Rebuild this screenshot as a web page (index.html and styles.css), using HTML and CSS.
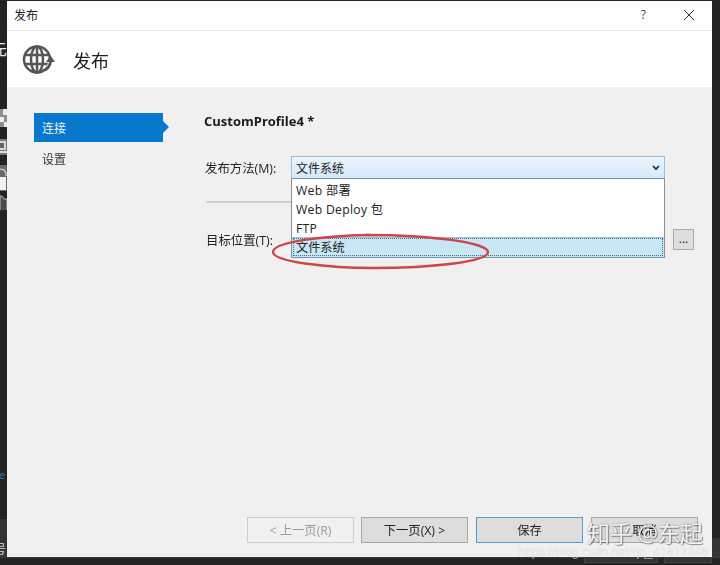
FILE: index.html
```html
<!DOCTYPE html>
<html lang="zh">
<head>
<meta charset="utf-8">
<title>发布</title>
<link rel="stylesheet" href="styles.css">
</head>
<body>
<div class="desktop">
  <div class="top-row">
    <aside class="left-strip">
      <span class="strip-char">先</span>
      <svg class="strip-icons" width="7" height="105" viewBox="0 0 7 105">
        <path d="M0 4h7v18H0z" fill="#8d8d8d"/>
        <path d="M3 4h4v6H3zM0 12h4v5H0zM4 17h3v5H4z" fill="#ececec"/>
        <path d="M0 34h7v16H0z" fill="#777"/>
        <path d="M0 36h6v9H0z" fill="#d8d8d8"/>
        <path d="M0 38h4v5H0z" fill="#666"/>
        <path d="M0 46h7v2H0z" fill="#e0e0e0"/>
        <path d="M0 60h7v26H0z" fill="#6a6a6a"/>
        <path d="M0 72h6v13H0z" fill="#f2f2f2"/>
        <path d="M0 64l4 1 2 3v3" fill="none" stroke="#ddd" stroke-width="1.2"/>
        <path d="M0 91h2l2 3h3v12H0z" fill="#4c4c4c" stroke="#bbb" stroke-width="1"/>
      </svg>
      <span class="strip-blue">e</span>
      <span class="strip-foot"><span class="strip-num">号</span></span>
    </aside>
    <main class="window">
      <header class="titlebar">
        <span class="titlebar-text">发布</span>
        <span class="titlebar-help">?</span>
        <svg class="titlebar-close" width="12" height="12" viewBox="0 0 12 12"><path d="M1 1l10 10M11 1L1 11" stroke="#333" stroke-width="1" fill="none"/></svg>
      </header>
      <section class="banner">
        <svg class="banner-icon" width="34" height="32" viewBox="0 0 34 32">
          <g fill="none" stroke="#555" stroke-width="2.500">
            <circle cx="15" cy="15.500" r="13"/>
            <ellipse cx="15" cy="15.500" rx="6" ry="13"/>
            <path d="M15 2.500v26M3 11h24M3 20h24"/>
          </g>
          <path d="M22 27.500c4-1 7-5 7-11" fill="none" stroke="#fff" stroke-width="6"/>
          <path d="M21 26.500c4-1 7-4 7.500-9" fill="none" stroke="#555" stroke-width="2.800"/>
          <path d="M24 18l4.500-6.500L33 18z" fill="#555"/>
        </svg>
        <h1 class="banner-title">发布</h1>
      </section>
      <div class="content">
        <nav class="sidebar">
          <div class="nav-item nav-active">连接</div>
          <div class="nav-item">设置</div>
        </nav>
        <div class="form">
          <h2 class="profile">CustomProfile4 *</h2>
          <div class="field method">
            <label class="field-label">发布方法(M):</label>
            <div class="select">
              <span>文件系统</span>
              <svg class="chevron" width="8" height="6" viewBox="0 0 8 6"><path d="M1 1l3 3 3-3" fill="none" stroke="#222" stroke-width="1.6"/></svg>
              <ul class="options">
                <li>Web 部署</li>
                <li>Web Deploy 包</li>
                <li>FTP</li>
                <li class="option-selected">文件系统</li>
              </ul>
            </div>
          </div>
          <hr class="divider">
          <div class="field target">
            <label class="field-label">目标位置(T):</label>
            <button class="browse">...</button>
          </div>
          <svg class="ring" width="222" height="40" viewBox="0 0 222 40">
            <path d="M100 3C50 4 3 10 3 20c0 10 57 16 100 16 57 0 115-6 115-16 0-9-53-17-123-17" fill="none" stroke="#cf4448" stroke-width="2.400"/>
          </svg>
        </div>
      </div>
      <footer class="footer">
        <button class="btn btn-disabled">&lt; 上一页(R)</button>
        <button class="btn">下一页(X) &gt;</button>
        <button class="btn btn-default">保存</button>
        <button class="btn">取消</button>
      </footer>
    </main>
    <aside class="right-strip"><span class="right-foot"></span></aside>
  </div>
  <div class="bottom-strip">
    <span class="taskbtn taskbtn-a"></span>
    <span class="taskbtn taskbtn-b"></span>
  </div>
  <div class="mark-zhihu">知乎 @东起</div>
  <div class="mark-csdn">https://blog.csdn.net/qq_41617848</div>
</div>
</body>
</html>
```
FILE: styles.css
```css
* { box-sizing: border-box; }
html, body { margin: 0; padding: 0; }
body {
  width: 720px;
  height: 565px;
  overflow: hidden;
  background: #262626;
  font-family: "Open Sans", "Noto Sans CJK SC", sans-serif;
  font-size: 12px;
  color: #222;
}
.desktop {
  position: relative;
  width: 720px;
  height: 565px;
  display: flex;
  flex-direction: column;
  padding-top: 1px;
  overflow: hidden;
  filter: blur(0.35px);
}
.top-row { display: flex; height: 556px; }
.left-strip { position: relative; width: 7px; overflow: hidden; background: #232323; }
.strip-char { position: absolute; left: -10px; top: 38px; font-size: 17px; line-height: 20px; color: #e8e8e8; }
.strip-icons { position: absolute; left: 0; top: 104px; }
.strip-blue { position: absolute; left: -1px; top: 467px; font-size: 11px; line-height: 14px; color: #2f7fc0; }
.strip-foot { position: absolute; left: 0; top: 518px; width: 7px; height: 38px; background: #333; }
.strip-num { position: absolute; left: -6px; top: 24px; font-size: 12px; line-height: 14px; color: #d8d8d8; }
.right-strip { position: relative; width: 8px; background: #232323; }
.right-foot { position: absolute; left: 0; top: 537px; width: 8px; height: 19px; background: #343434; }
.window { width: 705px; display: flex; flex-direction: column; background: #f0f0f0; }
.titlebar { height: 30px; display: flex; align-items: center; background: #fff; border-bottom: 1px solid #ececec; padding: 0 17px 2px 7px; }
.titlebar-text { font-size: 12px; color: #222; flex: 1; }
.titlebar-help { font-size: 12px; color: #444; margin-right: 37px; }
.banner { height: 56px; display: flex; align-items: center; padding-left: 15px; background: #fff; }
.banner-icon { flex: none; margin-top: 2px; }
.banner-title { margin: 4px 0 0 17px; font-size: 18px; font-weight: 400; color: #1f1f1f; line-height: 24px; }
.content { flex: 1; display: flex; }
.sidebar { width: 197px; padding: 26px 0 0 27px; }
.nav-item { position: relative; width: 129px; height: 29px; margin-bottom: 2px; padding-left: 8px; font-size: 12px; line-height: 31px; color: #333; }
.nav-active { background: #0878cc; color: #e8f4ff; }
.nav-active::after { content: ""; position: absolute; left: 129px; top: 8px; border-left: 6px solid #0878cc; border-top: 6px solid transparent; border-bottom: 6px solid transparent; }
.form { position: relative; flex: 1; padding: 25px 0 0 0; }
.profile { margin: 0; font-size: 13px; line-height: 18px; font-weight: 700; color: #1a1a1a; }
.field { display: flex; align-items: center; }
.field-label { width: 87px; padding-left: 1px; font-size: 12.4px; white-space: nowrap; color: #222; }
.method { margin-top: 26px; height: 23px; }
.select { position: relative; width: 374px; height: 23px; padding-left: 4px; display: flex; align-items: center; justify-content: space-between; background: linear-gradient(#eaf4fd, #d6e9fa); border: 1px solid #9cc0dc; border-bottom-color: #6f98b8; font-size: 12px; }
.chevron { margin-right: 4px; }
.options { position: absolute; z-index: 2; left: -1px; top: 21px; width: 374px; height: 80px; margin: 0; padding: 1px 0 0; list-style: none; background: #fff; border: 1px solid #8f8f8f; border-top-color: #6f98b8; border-bottom: 2px solid #6f98b8; }
.options li { height: 19px; line-height: 21px; padding-left: 4px; font-size: 12.2px; color: #222; letter-spacing: 0.3px; }
.options .option-selected { height: 20px; line-height: 20px; background: #c9e6f5; outline: 1px dotted #3f6f8c; outline-offset: -2px; border-top: 1px solid #9fc4d8; letter-spacing: 0; }
.divider { width: 85px; height: 2px; margin: 22px 0 0 2px; border: 0; background: #cfcfcf; }
.target { height: 21px; margin-top: 26px; position: relative; }
.target .field-label { padding-left: 2px; }
.browse { position: absolute; left: 469px; top: 0; width: 21px; height: 21px; padding: 0 0 3px; background: #dedede; border: 1px solid #a9a9a9; font: 12px "Open Sans", sans-serif; color: #222; }
.ring { position: absolute; z-index: 3; left: 66px; top: 145px; }
.footer { height: 40px; display: flex; padding-left: 240px; gap: 8px; background: #f0f0f0; }
.btn { width: 107px; height: 26px; padding: 0; background: #dddddd; border: 1px solid #a8a8a8; font: 12.3px "Open Sans", "Noto Sans CJK SC", sans-serif; color: #222; }
.footer .btn:first-child { margin-right: -1px; }
.btn-disabled { background: #f0f0f0; border-color: #cdcdcd; color: #9a9a9a; }
.btn-default { border-color: #4f9fd0; }
.bottom-strip { flex: 1; display: flex; padding-left: 584px; gap: 6px; background: #242424; border-top: 1px solid #3a3a3a; }
.taskbtn { height: 5px; background: #333; border: 1px solid #444; border-top: 0; }
.taskbtn-a { width: 74px; }
.taskbtn-b { width: 48px; }
.mark-zhihu { position: absolute; left: 587px; top: 518px; font-size: 23px; line-height: 30px; color: rgba(255,255,255,0.9); text-shadow: 0 0 2px rgba(0,0,0,0.45), 1px 1px 1px rgba(0,0,0,0.35); white-space: nowrap; letter-spacing: -0.5px; }
.mark-csdn { position: absolute; left: 518px; top: 544px; font-family: "Liberation Sans", sans-serif; font-size: 12.4px; line-height: 16px; color: rgba(255,255,255,0.6); text-shadow: 0 0 1px rgba(0,0,0,0.2); white-space: nowrap; }
```
